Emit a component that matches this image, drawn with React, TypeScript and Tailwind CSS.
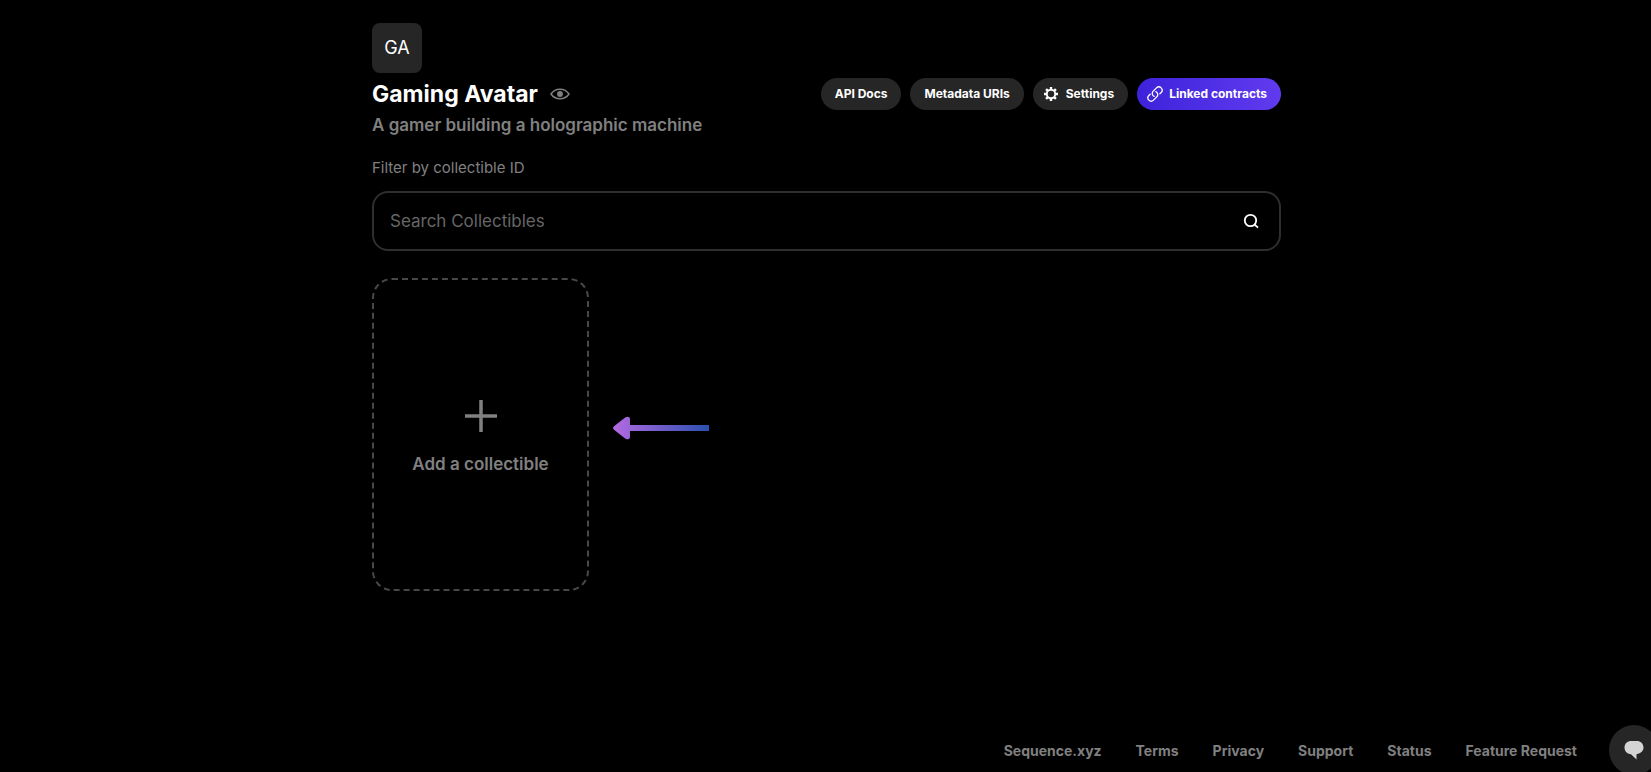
import React from "react";

const footerLinks = ["Sequence.xyz", "Terms", "Privacy", "Support", "Status", "Feature Request"];

const pill =
  "flex h-8 cursor-pointer items-center rounded-full bg-[#262626] text-[12px] font-bold text-white";

function EyeIcon() {
  return (
    <svg width="20" height="14" viewBox="0 0 20 14" fill="none" aria-hidden="true">
      <path
        d="M1 7C3.200 3.700 6.300 2.200 10 2.200s6.800 1.500 9 4.800c-2.200 3.300-5.300 4.800-9 4.800S3.200 10.300 1 7Z"
        stroke="#808080"
        strokeWidth="1.500"
        strokeLinejoin="round"
      />
      <circle cx="10" cy="7" r="2.900" fill="#808080" />
    </svg>
  );
}

function GearIcon() {
  return (
    <svg width="14" height="14" viewBox="0 0 14 14" aria-hidden="true">
      <g fill="none" stroke="white">
        <circle cx="7" cy="7" r="4.200" strokeWidth="1.900" />
        <g strokeWidth="2.400">
          <path d="M7 0v2.500M7 11.500V14M0 7h2.500M11.500 7H14" />
          <path d="M2.050 2.050l1.770 1.770M10.180 10.180l1.770 1.770M2.050 11.950l1.770-1.770M10.180 3.820l1.770-1.770" />
        </g>
      </g>
    </svg>
  );
}

function LinkIcon() {
  return (
    <svg
      width="16"
      height="16"
      viewBox="1 1 22 22"
      fill="none"
      stroke="white"
      strokeWidth="1.800"
      strokeLinecap="round"
      strokeLinejoin="round"
      aria-hidden="true"
    >
      <path d="M13.190 8.688a4.500 4.500 0 0 1 1.242 7.244l-4.500 4.500a4.500 4.500 0 0 1-6.364-6.364l1.757-1.757m13.350-.622 1.757-1.757a4.500 4.500 0 0 0-6.364-6.364l-4.500 4.500a4.500 4.500 0 0 0 1.242 7.244" />
    </svg>
  );
}

function SearchIcon() {
  return (
    <svg width="16" height="16" viewBox="0 0 16 16" fill="none" stroke="white" strokeWidth="1.800" aria-hidden="true">
      <circle cx="7.500" cy="7.500" r="5.700" />
      <path d="M11.500 11.500l3.500 3.200" />
    </svg>
  );
}

function ArrowIcon() {
  return (
    <svg width="96" height="24" viewBox="0 0 96 24" aria-hidden="true">
      <defs>
        <linearGradient id="arrow" x1="0" y1="0" x2="96" y2="0" gradientUnits="userSpaceOnUse">
          <stop offset="0" stopColor="#b36ae2" />
          <stop offset="1" stopColor="#2b4fb0" />
        </linearGradient>
      </defs>
      <path
        d="M1 10.300 12.500 1.300C14.500 0 17 .8 17 3V9h79v6H17v6c0 2.200-2.500 3-4.500 1.700L1 13.700Q-.8 12 1 10.300Z"
        fill="url(#arrow)"
      />
    </svg>
  );
}

export default function App() {
  return (
    <div className="flex min-h-screen flex-col overflow-x-hidden bg-black font-['Inter',sans-serif] text-[#808080]">
      <main className="mx-auto w-full max-w-[911px] grow pt-[23px] pl-0.5">
        <div className="flex size-[50px] items-center justify-center rounded-lg bg-[#262626] text-lg text-white">
          GA
        </div>
        <header className="mt-[5px] flex items-center justify-between">
          <div className="flex items-center gap-3">
            <h1 className="text-[23px] leading-8 font-bold text-white">Gaming Avatar</h1>
            <EyeIcon />
          </div>
          <nav className="flex gap-[9px]" aria-label="Collection">
            <button className={`${pill} px-[14px]`}>API Docs</button>
            <button className={`${pill} px-[14px]`}>Metadata URIs</button>
            <button className={`${pill} gap-2 pr-[14px] pl-[11px]`}>
              <GearIcon />
              Settings
            </button>
            <button className="flex h-8 cursor-pointer items-center gap-[6px] rounded-full bg-linear-to-r from-[#3d22db] to-[#613aef] pr-[14px] pl-[10px] text-[12px] font-bold text-white">
              <LinkIcon />
              Linked contracts
            </button>
          </nav>
        </header>
        <p className="mt-[3px] text-[17px] leading-6 font-semibold">A gamer building a holographic machine</p>

        <label htmlFor="search" className="mt-[21px] block text-[15px] leading-5">
          Filter by collectible ID
        </label>
        <div className="mt-[13px] flex h-[60px] items-center rounded-2xl border-2 border-[#2e2e2e] px-4">
          <input
            id="search"
            type="text"
            placeholder="Search Collectibles"
            className="h-full min-w-0 grow bg-transparent text-[17px] text-white outline-none placeholder:text-[#666666]"
          />
          <button aria-label="Search" className="mr-1 cursor-pointer">
            <SearchIcon />
          </button>
        </div>

        <div className="mt-[27px] flex items-start gap-6">
          <button className="flex h-[313px] w-[217px] cursor-pointer flex-col items-center justify-center gap-5 rounded-[20px] border-2 border-dashed border-[#484848] pt-1.5 text-[17px] leading-6 font-semibold">
            <svg width="32" height="32" viewBox="0 0 32 32" stroke="#808080" strokeWidth="3.500" aria-hidden="true">
              <path d="M16 0v32M0 16h32" />
            </svg>
            Add a collectible
          </button>
          <div className="pt-[138px]">
            <ArrowIcon />
          </div>
        </div>
      </main>

      <footer className="-mb-[3px] flex items-center justify-end">
        <nav className="flex gap-[34px] text-[14px] font-bold" aria-label="Footer">
          {footerLinks.map((label) => (
            <a key={label} href="#">
              {label}
            </a>
          ))}
        </nav>
        <button
          aria-label="Open chat"
          className="-mr-2 ml-8 flex size-[50px] shrink-0 cursor-pointer items-center justify-center rounded-full bg-[#262626]"
        >
          <svg width="20" height="20" viewBox="0 0 20 20" fill="#d4d4d4" aria-hidden="true">
            <path d="M7.500 1h5c4.200 0 7 2.700 7 6.500 0 3.300-2.300 5.800-7 6.700v5.300L7 14.200C3 13.800.5 11.200.5 7.500.5 3.700 3.300 1 7.500 1Z" />
          </svg>
        </button>
      </footer>
    </div>
  );
}
